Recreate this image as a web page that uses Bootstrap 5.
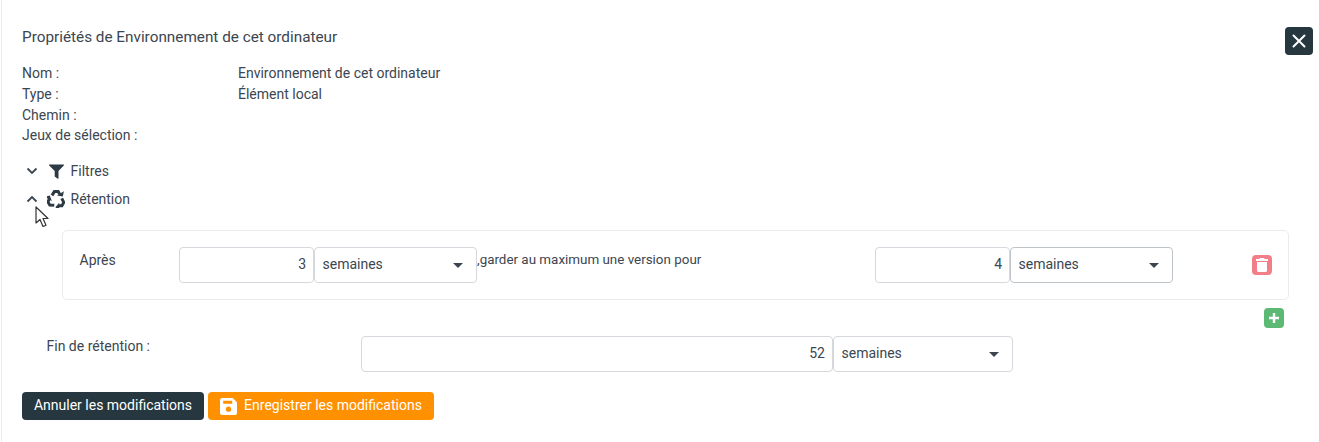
<!DOCTYPE html>
<html lang="fr">
<head>
<meta charset="utf-8">
<title>Propriétés</title>
<link href="https://cdn.jsdelivr.net/npm/bootstrap@5.3.0/dist/css/bootstrap.min.css" rel="stylesheet">
<style>
html,body{height:442px;overflow:hidden;background:#fff}
body{font-family:Roboto,"Liberation Sans",sans-serif;font-size:14px;color:#3b4650;line-height:20.8px}
.sheet{position:relative;height:442px;padding:27px 30px 0 20px;border-left:1px solid #ececec;margin-left:1px}
.ttl{font-size:15.3px;line-height:20px;margin:0 0 16px;font-weight:400;color:#3b4650}
.closer{position:absolute;left:1283px;top:27px;width:28px;height:28px;padding:0;background:#263740;border:0;border-radius:4px;display:flex;align-items:center;justify-content:center}
.propline{display:flex}
.propkey{width:216px}
.section{display:flex;align-items:center;height:20px}
.section.s1{margin-top:15px}
.section.s2{margin-top:8px}
.chev{width:20px;display:flex;justify-content:center}
.sico{width:28.5px;display:flex;justify-content:center}
.rulebox{margin:21px 0 0 40px;width:1227px;height:70px;border:1px solid #e9ecef;border-radius:5px;padding:16px 0 0 16.500px;display:flex;align-items:flex-start}
.apres{width:99.500px;margin-top:3px}
.fld{height:36px;border:1px solid #d5d9dd;border-radius:4px;background:#fff;font-size:14px;line-height:33px;color:#3b4650}
.fnum{text-align:right;padding-right:7px}
.fsel{padding:0 0 2px 7.500px;display:flex;justify-content:space-between;align-items:center}
.w135{width:135px}.w163{width:163px}
.w472{width:472px}.w180{width:180px}
.fsel svg{margin-right:13px;margin-top:3px}
.mid{width:398px;margin-top:3px;white-space:nowrap;font-size:13.4px}
.dark{border-color:#bfc4c9}
.tiny{width:20px;height:20px;border:0;padding:0;border-radius:4px;display:flex;align-items:center;justify-content:center}
.del{background:#f27f87;margin:8px 0 0 79px}
.add{background:#5cb974;margin:8px 0 0 1242px}
.finrow{display:flex;align-items:flex-start;margin-top:8px;padding-left:24.500px}
.finlab{width:314.500px}
.actions{display:flex;gap:4px;margin-top:20px}
.act{height:28px;border:0;border-radius:4px;font-size:14px;line-height:24px;padding:0 0 2px;color:#fff;display:flex;align-items:center;justify-content:center}
.act-cancel{width:182px;background:#263740}
.act-save{width:226px;background:#ff9100}
.act-save svg{margin:2px 7px 0 0}
.pointer{position:absolute;left:32px;top:206px}
</style>
</head>
<body>
<div class="sheet">
  <h5 class="ttl">Propriétés de Environnement de cet ordinateur</h5>
  <button class="closer" aria-label="Fermer"><svg width="14" height="14" viewBox="0 0 14 14"><path d="M1.500 1.500l11 11M12.500 1.500l-11 11" stroke="#fff" stroke-width="2" stroke-linecap="round"/></svg></button>
  <div class="propline"><div class="propkey">Nom :</div><div>Environnement de cet ordinateur</div></div>
  <div class="propline"><div class="propkey">Type :</div><div>Élément local</div></div>
  <div class="propline"><div class="propkey">Chemin :</div></div>
  <div class="propline"><div class="propkey">Jeux de sélection :</div></div>

  <div class="section s1">
    <span class="chev"><svg width="12" height="8" viewBox="0 0 12 8"><path d="M1.500 1.500L6 6l4.500-4.500" fill="none" stroke="#3b4650" stroke-width="1.800"/></svg></span>
    <span class="sico"><svg width="15" height="15" viewBox="0 0 15 15"><path d="M0.500 0.500h14a.5.5 0 0 1 .3.9L9.500 7v7.300a.5.5 0 0 1-.8.4l-3-2.200V7L.2 1.400A.5.5 0 0 1 .5.5z" fill="#2d3a44"/></svg></span>
    <span>Filtres</span>
  </div>
  <div class="section s2">
    <span class="chev"><svg width="12" height="8" viewBox="0 0 12 8"><path d="M1.500 6.500L6 2l4.500 4.500" fill="none" stroke="#3b4650" stroke-width="1.800"/></svg></span>
    <span class="sico"><svg width="18" height="18" viewBox="0 0 18 18" fill="#2d3a44"><g id="rc"><path d="M5 5.400L7.400 1.600h3.800l1.600 2.600" fill="none" stroke="#2d3a44" stroke-width="3"/><path d="M10 5.400l5.800 1.100 1.100-5.200z"/></g><use href="#rc" transform="rotate(120 9 9.700)"/><use href="#rc" transform="rotate(240 9 9.700)"/></svg></span>
    <span>Rétention</span>
  </div>

  <div class="rulebox">
    <div class="apres">Après</div>
    <div class="fld fnum w135">3</div>
    <div class="fld fsel w163">semaines<svg width="10" height="5" viewBox="0 0 10 5"><path d="M0 0h10L5 5z" fill="#3b4650"/></svg></div>
    <div class="mid">,garder au maximum une version pour</div>
    <div class="fld fnum w135">4</div>
    <div class="fld fsel w163 dark">semaines<svg width="10" height="5" viewBox="0 0 10 5"><path d="M0 0h10L5 5z" fill="#3b4650"/></svg></div>
    <button class="tiny del" aria-label="Supprimer"><svg width="12" height="14" viewBox="0 0 12 14" fill="#fff"><path d="M4 0h4l.6 1H12v2H0V1h3.400z"/><path d="M1 4h10v8.500c0 .8-.7 1.500-1.500 1.500h-7C1.700 14 1 13.300 1 12.500z"/></svg></button>
  </div>
  <button class="tiny add" aria-label="Ajouter"><svg width="12" height="12" viewBox="0 0 12 12"><path d="M6 1v10M1 6h10" stroke="#fff" stroke-width="2.400"/></svg></button>

  <div class="finrow">
    <div class="finlab">Fin de rétention :</div>
    <div class="fld fnum w472">52</div>
    <div class="fld fsel w180">semaines<svg width="10" height="5" viewBox="0 0 10 5"><path d="M0 0h10L5 5z" fill="#3b4650"/></svg></div>
  </div>

  <div class="actions">
    <button class="act act-cancel">Annuler les modifications</button>
    <button class="act act-save"><svg width="17" height="17" viewBox="0 0 16 16"><path fill="#fff" fill-rule="evenodd" d="M2 0h10l4 4v10a2 2 0 0 1-2 2H2a2 2 0 0 1-2-2V2a2 2 0 0 1 2-2zm1 2.500v3h8.500v-3zM8 8a2.500 2.500 0 1 0 0 5 2.500 2.500 0 0 0 0-5z"/></svg>Enregistrer les modifications</button>
  </div>
  <svg class="pointer" width="17" height="23" viewBox="0 0 17 23"><path d="M2 1v16l4-3.500 3 7 3-1.300-3-6.700h5z" fill="#fff" stroke="#333" stroke-width="1.200" stroke-linejoin="round"/></svg>
</div>
<script src="https://cdn.jsdelivr.net/npm/bootstrap@5.3.0/dist/js/bootstrap.bundle.min.js"></script>
</body>
</html>
